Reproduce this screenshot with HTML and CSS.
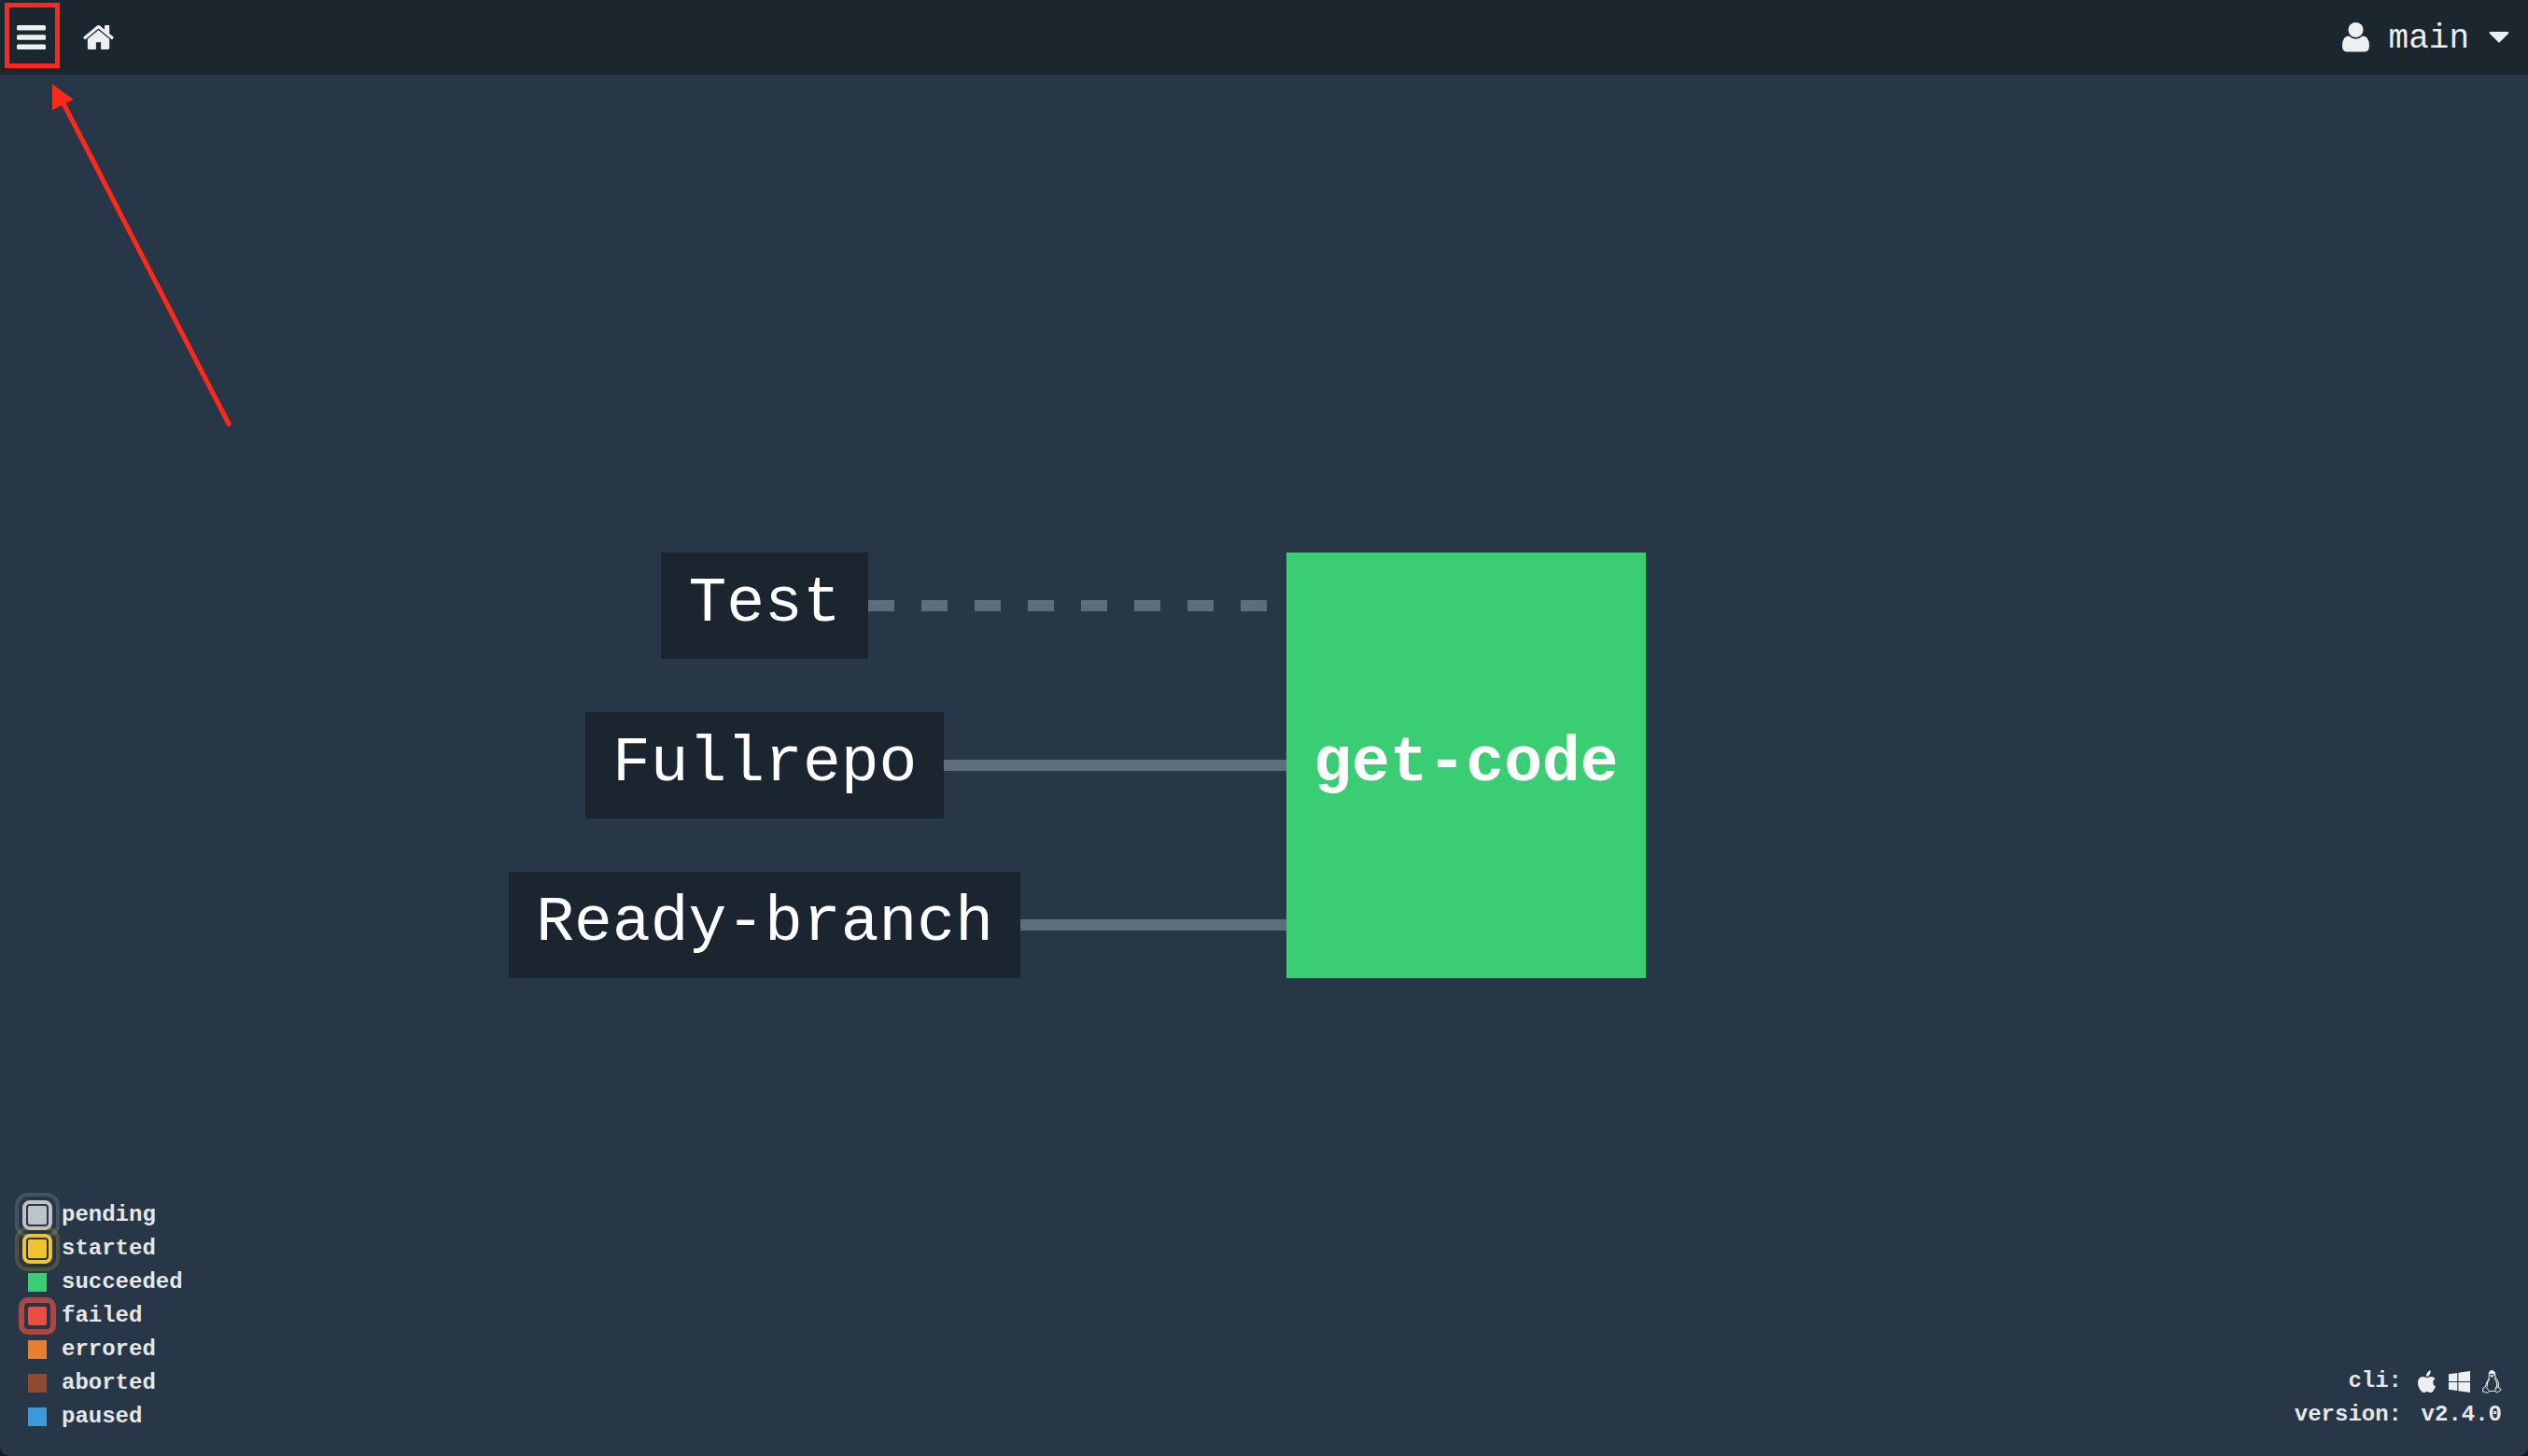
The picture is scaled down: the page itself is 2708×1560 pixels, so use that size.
FILE: index.html
```html
<!DOCTYPE html>
<html lang="en">
<head>
<meta charset="utf-8">
<meta name="viewport" content="width=device-width, initial-scale=1">
<title>main - Concourse</title>
<link rel="stylesheet" href="styles.css">
</head>
<body>
<div class="app">
  <header class="topbar">
    <nav class="topbar-nav">
      <button class="menu-button" type="button" aria-label="Toggle pipelines">
        <svg class="icon-bars" viewBox="0 0 31 26" aria-hidden="true"><rect width="31" height="5.500" rx="1.500"/><rect y="10.200" width="31" height="5.500" rx="1.500"/><rect y="20.500" width="31" height="5.500" rx="1.500"/></svg>
      </button>
      <a class="home-link" href="#" aria-label="Home">
        <svg class="icon-home" viewBox="0 0 1612 1283" aria-hidden="true"><path d="M1382 739v480q0 26-19 45t-45 19H934V899H678v384H294q-26 0-45-19t-19-45V739q0-1 .5-3t.500-3l575-474 575 474q1 2 1 6zm223-69l-62 74q-8 9-21 11h-3q-13 0-21-7L806 171 114 748q-12 8-24 7-13-2-21-11L7 670q-8-10-7-23.500T11 625L730 26q32-26 76-26t76 26l244 204V35q0-14 9-23t23-9h192q14 0 23 9t9 23v408l219 182q10 8 11 21.500t-7 23.500z"/></svg>
      </a>
    </nav>
    <button class="user-menu" type="button">
      <svg class="icon-user" viewBox="0 0 29 32" aria-hidden="true"><circle cx="14.500" cy="8" r="8"/><path d="M7.200 14.500Q10.300 17.700 14.500 17.700T21.800 14.500Q29 14.500 29 25.500 29 31.500 23.300 31.500H5.700Q0 31.500 0 25.500 0 14.500 7.200 14.500Z"/></svg>
      <span class="user-name">main</span>
      <svg class="icon-caret" viewBox="0 0 22 12" aria-hidden="true"><path d="M1 0H20Q22 0 21 2L12 11Q11 12 10 11L1 2Q0 1 1 0Z"/></svg>
    </button>
  </header>

  <main class="canvas">
    <div class="pipeline">
      <ul class="inputs">
        <li class="input"><a class="node" href="#">Test</a><span class="edge edge-dashed"></span></li>
        <li class="input"><a class="node" href="#">Fullrepo</a><span class="edge"></span></li>
        <li class="input"><a class="node" href="#">Ready-branch</a><span class="edge"></span></li>
      </ul>
      <a class="node job" href="#">get-code</a>
    </div>
  </main>

  <ul class="legend">
    <li><span class="swatch pending"></span>pending</li>
    <li><span class="swatch started"></span>started</li>
    <li><span class="swatch succeeded"></span>succeeded</li>
    <li><span class="swatch failed"></span>failed</li>
    <li><span class="swatch errored"></span>errored</li>
    <li><span class="swatch aborted"></span>aborted</li>
    <li><span class="swatch paused"></span>paused</li>
  </ul>

  <dl class="info">
    <dt>cli:</dt>
    <dd class="cli-links">
      <a href="#" aria-label="Download for macOS"><svg class="icon-os" viewBox="0 0 20 25" aria-hidden="true"><path d="M13.500 0Q14 3 12.500 5 11 7 9 7 8.700 4.500 10.300 2.500 11.600.700 13.500 0ZM19 17.500Q17.800 20.600 16.200 22.700 15 24 13.800 24 12.800 24 11.800 23.500T10 23.100 8.200 23.500Q7 24 6.200 24.100 5 24.100 3.600 22.500 0 18.200 0 13.500 0 10.500 1.500 8.800 3 7 5.200 7 6.200 7 7.600 7.600T9.600 8.200Q10.200 8.200 11.700 7.600T14.400 7Q17 7.100 18.500 9.200 16.200 10.600 16.200 13.100 16.200 16.200 19 17.500Z"/></svg></a>
      <a href="#" aria-label="Download for Windows"><svg class="icon-os icon-windows" viewBox="0 0 23 23" aria-hidden="true"><path d="M0 3.200 9.300 1.900V11H0ZM10.400 1.700 23 0V11H10.400ZM0 12H9.300V21.100L0 19.800ZM10.400 12H23V23L10.400 21.300Z"/></svg></a>
      <a href="#" aria-label="Download for Linux"><svg class="icon-os" viewBox="0 0 21 25" aria-hidden="true"><g fill="none" stroke="currentColor" stroke-width="1"><path d="M7.200 7Q6.500 1 10.300.700 14 .7 13.800 5.500 14 8 16 10.500 18.500 14 17.500 18L20.300 21.200 15.800 24 13.800 22.500H7.500L5.800 24.300.600 23 1 19 3.500 17.500Q4 13 7.200 9Z"/><path d="M3.500 17.500 7.500 22.300M14.500 18 13.800 22.500M17.500 18 16 19.500 14.500 18"/></g><path d="M7.500 1.500Q9-.3 11.600.500 14.200 1.500 13.700 6L12.700 6.500 12 4H8.300L7.500 5.500ZM13.200 8Q17 12 16.300 18L14.800 18.500Q16 12 12.200 8.500ZM7.500 9Q4.500 12.500 4.600 17L6 18.500Q5 13.500 8.300 9.500ZM8 5.500 10 5 12.500 6 10 8Z"/></svg></a>
    </dd>
    <dt>version:</dt>
    <dd>v2.4.0</dd>
  </dl>

  <svg class="annotation" viewBox="0 0 260 470" aria-hidden="true">
    <rect x="7.500" y="5.500" width="54" height="65" fill="none" stroke="#fd2a1c" stroke-width="5"/>
    <path d="M66 107 246 456" stroke="#fd2a1c" stroke-width="5"/>
    <path d="M56 90 78.500 106.500 56 118Z" fill="#fd2a1c"/>
  </svg>
</div>
</body>
</html>
```
FILE: styles.css
```css
* { box-sizing: border-box; }

body {
  margin: 0;
  background: #15171c;
  color: #e6e7e8;
  font-family: "Liberation Mono", "Courier New", Courier, monospace;
}

ul, dl, dd { margin: 0; padding: 0; list-style: none; }
a { color: inherit; text-decoration: none; }
button { margin: 0; border: 0; background: none; color: inherit; font: inherit; cursor: pointer; }
svg { display: block; fill: currentColor; }

.app {
  position: relative;
  display: flex;
  flex-direction: column;
  min-height: 100vh;
  overflow: hidden;
  border-radius: 0 0 10px 10px;
  background: #273747;
}

.topbar {
  display: flex;
  justify-content: space-between;
  align-items: center;
  height: 80px;
  padding: 0 20px 0 18px;
  background: #1c262f;
  color: #ecf0f1;
}

.topbar-nav { display: flex; align-items: center; gap: 40px; }
.menu-button { padding: 0; }
.icon-bars { width: 31px; height: 26px; }
.icon-home { width: 33px; height: 26px; }

.user-menu {
  display: flex;
  align-items: center;
  gap: 21px;
  padding: 0;
  font-size: 36px;
  line-height: 40px;
}
.user-name { padding-top: 4px; }
.icon-user { width: 29px; height: 32px; }
.icon-caret { width: 22px; height: 12px; }

.canvas {
  flex: 1;
  display: flex;
  align-items: center;
  padding-left: 20.13%;
}

.pipeline { display: flex; }

.inputs {
  display: flex;
  flex-direction: column;
  gap: 57px;
  width: 833px;
}

.input {
  display: grid;
  grid-template-columns: 1fr auto 1fr 285px;
  align-items: center;
}

.node {
  grid-column: 2;
  padding: 15px 29px 19px;
  background: #1b252f;
  color: #fff;
  font-size: 68px;
  line-height: 80px;
}

.edge { grid-column: 3 / 5; height: 12px; background: #5d6d7e; }
.edge-dashed { background: repeating-linear-gradient(90deg, #5d6d7e 0 28px, transparent 28px 57px); }

.job {
  display: flex;
  align-items: center;
  background: #3acd74;
  font-weight: bold;
}

.legend {
  position: absolute;
  left: 30px;
  bottom: 24px;
  font-size: 24px;
  font-weight: bold;
  line-height: 36px;
}
.legend li { display: flex; align-items: center; gap: 16px; }

.swatch { position: relative; width: 20px; height: 20px; }
.swatch::before, .swatch::after { position: absolute; }

.pending { background: #bdc3c7; color: #bdc3c7; }
.started { background: #f1c42f; color: #f1c42f; }
.succeeded { background: #3acd74; }
.failed { background: #e84f41; color: #e84f41; }
.errored { background: #e67f32; }
.aborted { background: #8f4b2f; }
.paused { background: #3c99dc; }

.pending, .started, .failed { border-radius: 2px; }
.pending::before, .started::before {
  content: "";
  inset: -6px;
  border: 4px solid;
  border-radius: 8px;
}
.pending::after, .started::after {
  content: "";
  inset: -14px;
  border: 4px solid;
  border-radius: 14px;
  opacity: 0.2;
}
.failed::after {
  content: "";
  inset: -10px;
  border: 6px solid;
  border-radius: 10px;
  opacity: 0.7;
}

.info {
  position: absolute;
  right: 28px;
  bottom: 26px;
  display: grid;
  grid-template-columns: auto auto;
  column-gap: 17px;
  font-size: 24px;
  font-weight: bold;
  line-height: 36px;
  text-align: right;
}
.cli-links { display: flex; align-items: center; justify-content: flex-end; gap: 13px; color: #ecf0f1; }
.icon-os { height: 25px; }
.icon-windows { height: 23px; }

.annotation {
  position: absolute;
  left: 0;
  top: 0;
  width: 260px;
  height: 470px;
  pointer-events: none;
}
```
